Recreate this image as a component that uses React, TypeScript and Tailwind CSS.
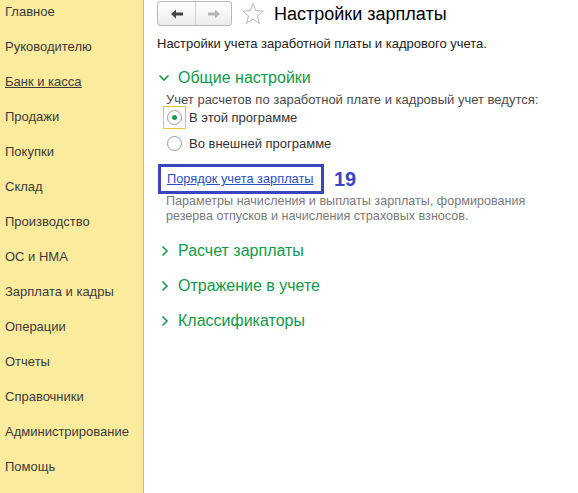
import React from "react";

const nav = [
  "Главное",
  "Руководителю",
  "Банк и касса",
  "Продажи",
  "Покупки",
  "Склад",
  "Производство",
  "ОС и НМА",
  "Зарплата и кадры",
  "Операции",
  "Отчеты",
  "Справочники",
  "Администрирование",
  "Помощь",
];

const ChevronRight = () => (
  <svg width="10" height="12" viewBox="0 0 10 12" className="shrink-0">
    <path d="M2.5 1.5 L7 6 L2.5 10.5" fill="none" stroke="#1a9b4b" strokeWidth="1.6" />
  </svg>
);

const ChevronDown = () => (
  <svg width="12" height="10" viewBox="0 0 12 10" className="shrink-0">
    <path d="M1.5 2.5 L6 7 L10.5 2.5" fill="none" stroke="#1a9b4b" strokeWidth="1.6" />
  </svg>
);

export default function App() {
  return (
    <div
      className="flex w-[578px] h-[493px] bg-white overflow-hidden"
      style={{ fontFamily: '"Liberation Sans", Arial, sans-serif' }}
    >
      <div className="w-[144px] shrink-0 bg-[#fbeb9d] border-r border-[#cdbd7c] flex flex-col pt-[3px]">
        {nav.map((n) => (
          <div
            key={n}
            className={`h-[35px] pl-[5px] text-[13px] leading-[18px] text-[#3b3b3b] ${
              n === "Банк и касса" ? "underline" : ""
            }`}
          >
            {n}
          </div>
        ))}
      </div>
      <div className="flex-1 flex flex-col pl-[13px] pt-[1px]">
        <div className="flex items-center h-[25px]">
          <div className="flex w-[75px] h-[25px] border border-[#b9b9b9] rounded-[3px] bg-gradient-to-b from-white to-[#ececec]">
            <div className="w-[38px] flex items-center justify-center border-r border-[#cfcfcf]">
              <svg width="14" height="12" viewBox="0 0 14 12">
                <path d="M1 6 L6 1.5 L6 4.5 L13 4.5 L13 7.5 L6 7.5 L6 10.5 Z" fill="#444" />
              </svg>
            </div>
            <div className="flex-1 flex items-center justify-center">
              <svg width="14" height="12" viewBox="0 0 14 12">
                <path d="M13 6 L8 1.5 L8 4.5 L1 4.5 L1 7.5 L8 7.5 L8 10.5 Z" fill="#b5b5b5" />
              </svg>
            </div>
          </div>
          <svg width="24" height="23" viewBox="0 0 24 23" className="ml-[9px]">
            <path
              d="M12 1.5 L14.8 8.6 L22.4 9.1 L16.5 13.9 L18.4 21.3 L12 17.2 L5.6 21.3 L7.5 13.9 L1.6 9.1 L9.2 8.6 Z"
              fill="none"
              stroke="#b8b8b8"
              strokeWidth="1"
            />
          </svg>
          <div className="ml-[9px] text-[18px] leading-[24px] text-black">Настройки зарплаты</div>
        </div>
        <div className="mt-[10px] text-[13px] leading-[16px] text-[#222]">
          Настройки учета заработной платы и кадрового учета.
        </div>
        <div className="mt-[16px] flex items-center gap-[8px] pl-[1px]">
          <ChevronDown />
          <div className="text-[16px] leading-[20px] text-[#0f9a48]">Общие настройки</div>
        </div>
        <div className="mt-[4px] pl-[9px] text-[13px] leading-[16px] text-[#4a4a4a]">
          Учет расчетов по заработной плате и кадровый учет ведутся:
        </div>
        <div className="mt-[-2px] flex items-center pl-[6px]">
          <div className="w-[23px] h-[23px] border border-[#f0c23a] flex items-center justify-center">
            <div className="w-[15px] h-[15px] rounded-full border border-[#9a9a9a] bg-white flex items-center justify-center">
              <div className="w-[5px] h-[5px] rounded-full bg-[#1a9b4b]" />
            </div>
          </div>
          <div className="ml-[3px] text-[13px] leading-[16px] text-[#333]">В этой программе</div>
        </div>
        <div className="mt-[3px] flex items-center pl-[6px]">
          <div className="w-[23px] h-[23px] flex items-center justify-center">
            <div className="w-[15px] h-[15px] rounded-full border border-[#9a9a9a] bg-white" />
          </div>
          <div className="ml-[3px] text-[13px] leading-[16px] text-[#333]">Во внешней программе</div>
        </div>
        <div className="mt-[9px] flex items-center ml-[1px]">
          <div className="border-[3px] border-[#3a45c2] h-[30px] w-[166px] flex items-center pl-[6px]">
            <span className="text-[12.8px] leading-[16px] text-[#2b4fc4] underline">Порядок учета зарплаты</span>
          </div>
          <div className="ml-[10px] text-[20px] leading-[24px] font-bold text-[#3a45c2]">19</div>
        </div>
        <div className="mt-0 pl-[9px] text-[12.6px] leading-[15px] text-[#7a7a7a]">
          Параметры начисления и выплаты зарплаты, формирования
          <br />
          резерва отпусков и начисления страховых взносов.
        </div>
        {["Расчет зарплаты", "Отражение в учете", "Классификаторы"].map((t, i) => (
          <div
            key={t}
            className={`flex items-center gap-[8px] pl-[3px] ${i === 0 ? "mt-[17px]" : "mt-[15px]"}`}
          >
            <ChevronRight />
            <div className="text-[16px] leading-[20px] text-[#0f9a48]">{t}</div>
          </div>
        ))}
      </div>
    </div>
  );
}
